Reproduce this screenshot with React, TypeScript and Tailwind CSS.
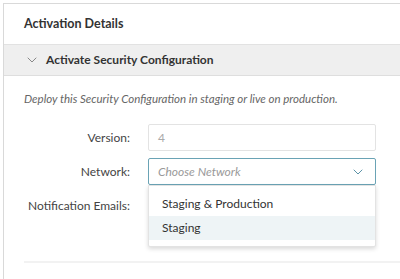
import { ChevronDown } from 'lucide-react';

export default function App() {
  return (
    <div className="bg-white h-[279px] overflow-hidden pt-[3px] pl-[3px] font-['Lato',sans-serif]">
      <div className="border-l border-t border-[#d9d9d9] h-full">
        {/* Card header */}
        <div className="h-[41px] flex items-center pl-[20px] border-b border-[#e2e2e2]">
          <h2 className="text-[12.5px] font-bold text-[#333]">Activation Details</h2>
        </div>

        {/* Collapsible section bar */}
        <div className="h-[31px] flex items-center bg-[#efefef] border-b border-[#dedede] pl-[20px]">
          <ChevronDown className="w-[16px] h-[16px] text-[#777]" strokeWidth={1.3} />
          <span className="ml-[6px] text-[12px] font-bold text-[#333]">Activate Security Configuration</span>
        </div>

        <div className="pl-[20px] pt-[14px]">
          <p className="text-[11.5px] italic text-[#666]">
            Deploy this Security Configuration in staging or live on production.
          </p>

          <div className="mt-[17px] grid grid-cols-[106px_228px] gap-x-[18px] items-center">
            <label className="text-right text-[12px] text-[#444]">Version:</label>
            <div className="h-[27px] border border-[#e3e3e3] rounded-[2px] flex items-center px-[9px] text-[12px] text-[#aaa]">4</div>

            <label className="text-right text-[12px] text-[#444] mt-[7px]">Network:</label>
            <div className="relative mt-[7px]">
              <div className="h-[27px] border border-[#6aa3b5] rounded-[2px] flex items-center justify-between px-[9px]">
                <span className="text-[12px] italic text-[#999]">Choose Network</span>
                <ChevronDown className="w-[16px] h-[16px] text-[#5b93a8]" strokeWidth={1.5} />
              </div>
              <div className="absolute left-0 right-0 top-[27px] bg-white border border-[#e3e3e3] rounded-b-[2px] shadow-[0_2px_4px_rgba(0,0,0,0.15)] py-[6px] z-10">
                <div className="h-[24px] flex items-center px-[13px] text-[12px] text-[#333]">Staging &amp; Production</div>
                <div className="h-[24px] flex items-center px-[13px] text-[12px] text-[#333] bg-[#eef4f6]">Staging</div>
              </div>
            </div>

            <label className="text-right text-[12px] text-[#444] mt-[7px] h-[27px] flex items-center justify-end">Notification Emails:</label>
            <div className="h-[27px] mt-[7px]" />
          </div>

          <div className="mt-[42px] h-[2px] bg-[#f2f2f2]" />
        </div>
      </div>
    </div>
  );
}
